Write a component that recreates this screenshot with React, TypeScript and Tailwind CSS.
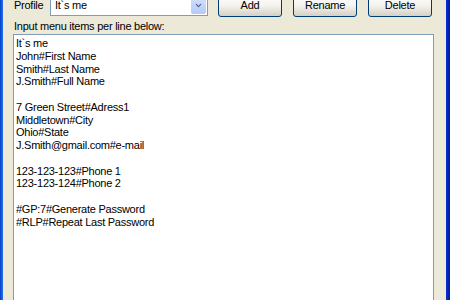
import { ChevronDown } from 'lucide-react'

const lines = [
  "It`s me",
  "John#First Name",
  "Smith#Last Name",
  "J.Smith#Full Name",
  "",
  "7 Green Street#Adress1",
  "Middletown#City",
  "Ohio#State",
  "J.Smith@gmail.com#e-mail",
  "",
  "123-123-123#Phone 1",
  "123-123-124#Phone 2",
  "",
  "#GP:7#Generate Password",
  "#RLP#Repeat Last Password",
]

function XpButton({ label }: { label: string }) {
  return (
    <button className="w-[64px] h-[23px] rounded-[3px] border border-[#003c74] bg-gradient-to-b from-[#ffffff] via-[#f4f3ee] to-[#d6d0c5] text-[11px] text-black leading-none flex items-center justify-center pb-[1px]">
      {label}
    </button>
  )
}

export default function App() {
  return (
    <div
      className="w-[450px] h-[300px] overflow-hidden flex bg-[#ece9d8] text-black tracking-[-0.25px]"
      style={{ fontFamily: '"Liberation Sans", Arial, sans-serif' }}
    >
      {/* left window frame */}
      <div className="w-[3px] shrink-0 bg-gradient-to-r from-[#0040c8] to-[#2a72ee]" />

      <div className="flex-1 flex flex-col pl-[10px] pr-[12px]">
        {/* profile row */}
        <div className="flex items-center h-[24px] -mt-[6px]">
          <span className="text-[11px] w-[37px] pl-[1px]">Profile</span>
          <div className="w-[158px] h-[21px] border border-[#7f9db9] bg-white flex items-center">
            <span className="flex-1 text-[11px] pl-[4px]">It`s me</span>
            <div className="w-[15px] h-[17px] mr-[1px] rounded-[2px] bg-gradient-to-b from-[#d5e1fd] to-[#b4c9f7] flex items-center justify-center">
              <ChevronDown size={9} strokeWidth={3} className="text-[#4d6185]" />
            </div>
          </div>
          <div className="flex gap-[11px] ml-[10px]">
            <XpButton label="Add" />
            <XpButton label="Rename" />
            <XpButton label="Delete" />
          </div>
        </div>

        <div className="text-[11px] pl-[1px] mt-[1px] h-[16px] flex items-center">
          Input menu items per line below:
        </div>

        {/* multiline edit */}
        <div className="flex-1 border border-[#7f9db9] bg-white pl-[2px] pt-[2px] min-h-[300px]">
          {lines.map((l, i) => (
            <div key={i} className="text-[11px] h-[12.75px] leading-[12.75px] whitespace-pre">
              {l}
            </div>
          ))}
        </div>
      </div>

      {/* right window frame */}
      <div className="w-[4px] shrink-0 bg-gradient-to-r from-[#0a2fd6] to-[#001a99]" />
    </div>
  )
}
